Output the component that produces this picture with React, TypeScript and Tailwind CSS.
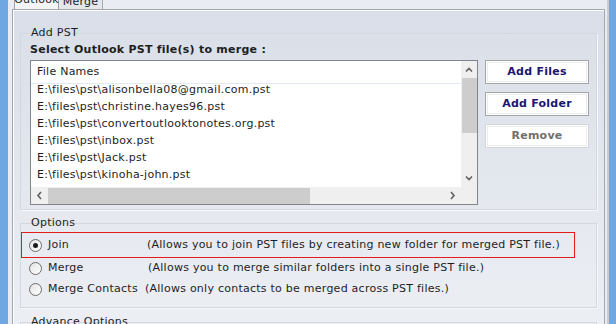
import React from "react";

const files = [
  "E:\\files\\pst\\alisonbella08@gmail.com.pst",
  "E:\\files\\pst\\christine.hayes96.pst",
  "E:\\files\\pst\\convertoutlooktonotes.org.pst",
  "E:\\files\\pst\\inbox.pst",
  "E:\\files\\pst\\Jack.pst",
  "E:\\files\\pst\\kinoha-john.pst",
];

const options = [
  { label: "Join", desc: "(Allows you to join PST files by creating new folder for merged PST file.)", checked: true, labelW: "w-[105px]" },
  { label: "Merge", desc: "(Allows you to merge similar folders into a single PST file.)", checked: false, labelW: "w-[106px]" },
  { label: "Merge Contacts", desc: "(Allows only contacts to be merged across PST files.)", checked: false, labelW: "w-[103px]" },
];

const Radio = ({ checked }: { checked: boolean }) => (
  <span className="flex h-[13px] w-[13px] shrink-0 items-center justify-center rounded-full border border-[#6b6b6b] bg-gradient-to-br from-[#e3e3e3] to-white">
    {checked && <span className="h-[5px] w-[5px] rounded-full bg-[#1a1a1a]" />}
  </span>
);

const Btn = ({ children, disabled }: { children: React.ReactNode; disabled?: boolean }) => (
  <div
    className={`flex h-[24px] w-[104px] items-center justify-center border bg-white p-[1px] ${
      disabled ? "border-[#d6d6d6]" : "border-[#a5a5a5]"
    }`}
  >
    <div
      className={`flex h-full w-full items-center justify-center border border-[#ececec] text-[11px] font-bold ${
        disabled ? "text-[#707070]" : "text-[#1b1670]"
      }`}
    >
      {children}
    </div>
  </div>
);

export default function App() {
  return (
    <div
      className="flex h-[324px] w-[616px] overflow-hidden bg-[#e4e8ef] text-[11px] tracking-[0.25px] text-[#1e1e1e]"
      style={{ fontFamily: '"DejaVu Sans", Verdana, sans-serif' }}
    >
      {/* window frame left */}
      <div className="w-[8px] shrink-0 bg-[#6ea7e2]" />
      <div className="flex w-[599px] shrink-0 flex-col bg-[#e9ecf2] pl-[4px] pr-[2px]">
        {/* tabs */}
        <div className="flex h-[9px] shrink-0 items-end pl-[2px]">
          <div className="flex h-[12px] w-[45px] items-end justify-center border-x border-[#9ea3aa] bg-[#f3f5f8] leading-[11px]">
            <span className="-mb-[1px] translate-y-[-5px]">Outlook</span>
          </div>
          <div className="flex h-[10px] w-[44px] items-end justify-center border-r border-[#a7abb1] bg-[#e4e6ea] leading-[11px]">
            <span className="translate-y-[-2px]">Merge</span>
          </div>
        </div>
        {/* tab panel */}
        <div className="flex flex-1 flex-col border border-b-0 border-[#a3a8ae] bg-gradient-to-b from-[#d9dee8] to-[#eef0f4] px-[7px] pt-[23px] shadow-[inset_1px_1px_0_#ffffff]">
          {/* Add PST group */}
          <div className="relative h-[177px] shrink-0 border border-[#d3d7de] shadow-[1px_1px_0_#f7f8fa]">
            <span className="absolute left-[8px] top-[-8px] px-[2px] leading-[14px]">Add PST</span>
            <div className="pl-[9px] pt-[9px]">
              <div className="h-[16px] font-bold leading-[14px]">Select Outlook PST file(s) to merge :</div>
              <div className="flex gap-[7px] pt-[1px]">
                {/* list box */}
                <div className="flex h-[145px] w-[448px] flex-col border border-[#7f858c] bg-white">
                  <div className="flex flex-1 overflow-hidden">
                    <div className="flex-1">
                      <div className="flex h-[23px] items-center border-b border-[#e3e9f3] pl-[6px]">File Names</div>
                      <div className="-mt-[2px]">
                        {files.map((f) => (
                          <div key={f} className="flex h-[17px] items-center pl-[6px]">
                            {f}
                          </div>
                        ))}
                      </div>
                    </div>
                    {/* vertical scrollbar */}
                    <div className="flex w-[16px] flex-col items-center bg-[#efefef]">
                      <svg width="16" height="17" viewBox="0 0 16 17">
                        <path d="M5 10.5 L8 7.5 L11 10.5" fill="none" stroke="#606060" strokeWidth="1.6" />
                      </svg>
                      <div className="h-[55px] w-[15px] bg-[#cdcdcd]" />
                      <div className="flex-1" />
                      <svg width="16" height="17" viewBox="0 0 16 17">
                        <path d="M5 6.5 L8 9.5 L11 6.5" fill="none" stroke="#606060" strokeWidth="1.6" />
                      </svg>
                    </div>
                  </div>
                  {/* horizontal scrollbar */}
                  <div className="flex h-[17px] items-center bg-[#efefef]">
                    <svg width="17" height="17" viewBox="0 0 17 17">
                      <path d="M10 5 L7 8.5 L10 12" fill="none" stroke="#606060" strokeWidth="1.6" />
                    </svg>
                    <div className="h-[16px] w-[262px] bg-[#cdcdcd]" />
                    <div className="flex-1" />
                    <svg width="17" height="17" viewBox="0 0 17 17">
                      <path d="M7 5 L10 8.5 L7 12" fill="none" stroke="#606060" strokeWidth="1.6" />
                    </svg>
                    <div className="w-[16px]" />
                  </div>
                </div>
                {/* buttons */}
                <div className="flex flex-col gap-[8px]">
                  <Btn>Add Files</Btn>
                  <Btn>Add Folder</Btn>
                  <Btn disabled>Remove</Btn>
                </div>
              </div>
            </div>
          </div>

          {/* Options group */}
          <div className="relative mt-[13px] h-[85px] shrink-0 border border-[#d3d7de] shadow-[1px_1px_0_#f7f8fa]">
            <span className="absolute left-[8px] top-[-8px] px-[2px] leading-[14px]">Options</span>
            <div className="flex flex-col pt-[8px]">
              {options.map((o) => (
                <div
                  key={o.label}
                  className={`flex items-center ${o.checked ? "mr-[21px] h-[26px] border border-[#e41b1b]" : "h-[21px]"}`}
                >
                  <div className={`flex items-center ${o.checked ? "pl-[7px]" : "pl-[8px]"}`}>
                    <Radio checked={o.checked} />
                    <span className={`pl-[6px] ${o.labelW}`}>{o.label}</span>
                  </div>
                  <span>{o.desc}</span>
                </div>
              ))}
            </div>
          </div>

          {/* Advance Options group */}
          <div className="relative mt-[14px] h-[30px] shrink-0 border border-[#d3d7de]">
            <span className="absolute left-[8px] top-[-8px] px-[2px] leading-[14px]">Advance Options</span>
          </div>
        </div>
      </div>
      <div className="w-[2px] shrink-0 bg-[#c9ccd1]" />
      {/* window frame right */}
      <div className="flex-1 bg-[#6ea7e2]" />
    </div>
  );
}
